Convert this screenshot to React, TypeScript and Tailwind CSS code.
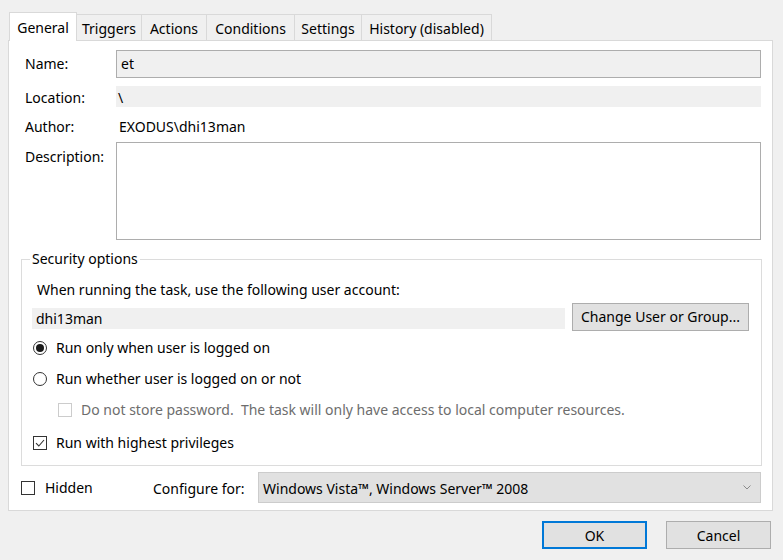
import React from "react";

const font = { fontFamily: '"Noto Sans", "Open Sans", sans-serif' };

function Radio({ checked }: { checked?: boolean }) {
  return (
    <span className="w-[14px] h-[14px] rounded-full border border-[#333333] bg-white flex items-center justify-center shrink-0">
      {checked && <span className="w-[8px] h-[8px] rounded-full bg-[#1a1a1a]" />}
    </span>
  );
}

function Check({ checked, disabled }: { checked?: boolean; disabled?: boolean }) {
  return (
    <span
      className={
        "w-[14px] h-[14px] border bg-white flex items-center justify-center shrink-0 " +
        (disabled ? "border-[#cccccc]" : "border-[#333333]")
      }
    >
      {checked && (
        <svg width="10" height="10" viewBox="0 0 10 10">
          <path d="M1 5.2 L3.8 8 L9 2" fill="none" stroke="#333" strokeWidth="1.1" />
        </svg>
      )}
    </span>
  );
}

export default function App() {
  const tabs = ["Triggers", "Actions", "Conditions", "Settings", "History (disabled)"];
  const tabW = [65, 65, 88, 67, 130];
  return (
    <div className="w-[783px] h-[560px] bg-[#f0f0f0] text-black text-[14px] leading-none overflow-hidden" style={font}>
      <div className="pt-[12px] pl-[9px] flex items-end h-[40px]">
        <div className="w-[68px] h-[29px] bg-white border border-b-0 border-[#d9d9d9] flex items-center justify-center relative z-10 -mb-px pt-[2px]">
          General
        </div>
        {tabs.map((t, i) => (
          <div
            key={t}
            style={{ width: tabW[i] }}
            className="h-[26px] bg-[#f0f0f0] border border-l-0 border-b-0 border-[#d9d9d9] flex items-center justify-center pt-[3px]"
          >
            {t}
          </div>
        ))}
      </div>
      <div className="ml-[8px] w-[765px] h-[471px] bg-white border border-[#d9d9d9] pl-[16px] pr-[11px] pt-[9px]">
        <div className="flex items-center h-[28px]">
          <div className="w-[91px]">Name:</div>
          <div className="flex-1 h-[28px] bg-[#f0f0f0] border border-[#adadad] flex items-center px-[4px]">et</div>
        </div>
        <div className="flex items-center h-[21px] mt-[8px]">
          <div className="w-[91px] pt-[3px]">Location:</div>
          <div className="flex-1 h-[21px] bg-[#f0f0f0] flex items-center px-[2px] pt-[3px]">\</div>
        </div>
        <div className="flex items-center h-[20px] mt-[9px]">
          <div className="w-[91px] pt-[1px]">Author:</div>
          <div className="flex-1 px-[3px] pt-[1px]">EXODUS\dhi13man</div>
        </div>
        <div className="flex items-start mt-[6px]">
          <div className="w-[91px] pt-[8px]">Description:</div>
          <div className="flex-1 h-[98px] bg-white border border-[#adadad]" />
        </div>
        <fieldset className="ml-[-4px] mt-[11px] h-[215px] border border-[#dcdcdc] pl-[10px] pr-[12px]">
          <legend className="ml-[-2px] px-[2px] leading-[16px]">Security options</legend>
          <div className="pl-[5px] mt-[16px]">When running the task, use the following user account:</div>
          <div className="flex items-start mt-[6px] h-[28px]">
            <div className="w-[533px] h-[21px] mt-[5px] bg-[#f0f0f0] flex items-center px-[4px]">dhi13man</div>
            <div className="ml-[7px] w-[177px] h-[28px] bg-[#e1e1e1] border border-[#adadad] flex items-center justify-center">
              Change User or Group...
            </div>
          </div>
          <div className="flex items-center gap-[9px] mt-[8px] h-[18px] pl-[1px]">
            <Radio checked />
            <span>Run only when user is logged on</span>
          </div>
          <div className="flex items-center gap-[9px] mt-[13px] h-[18px] pl-[1px]">
            <Radio />
            <span>Run whether user is logged on or not</span>
          </div>
          <div className="flex items-center gap-[9px] mt-[13px] h-[18px] pl-[26px] text-[#6d6d6d]">
            <Check disabled />
            <span>Do not store password.&nbsp; The task will only have access to local computer resources.</span>
          </div>
          <div className="flex items-center gap-[9px] mt-[15px] h-[18px] pl-[1px]">
            <Check checked />
            <span>Run with highest privileges</span>
          </div>
        </fieldset>
        <div className="flex items-center mt-[6px] ml-[-4px] h-[31px]">
          <div className="flex items-center gap-[10px] w-[132px]">
            <Check />
            <span>Hidden</span>
          </div>
          <div className="w-[105px] pt-[2px]">Configure for:</div>
          <div className="flex-1 h-[31px] bg-[#e1e1e1] border border-[#cccccc] flex items-center justify-between pl-[4px] pr-[9px]">
            <span className="pt-[2px]">Windows Vista™, Windows Server™ 2008</span>
            <svg width="8" height="5" viewBox="0 0 8 5">
              <path d="M0.5 0.5 L4 4 L7.5 0.5" fill="none" stroke="#8a8a8a" strokeWidth="1" />
            </svg>
          </div>
        </div>
      </div>
      <div className="flex justify-end gap-[19px] pr-[12px] mt-[10px]">
        <div className="w-[105px] h-[28px] bg-[#e1e1e1] border-2 border-[#0078d7] flex items-center justify-center pt-[1px]">OK</div>
        <div className="w-[105px] h-[28px] bg-[#e1e1e1] border border-[#adadad] flex items-center justify-center pt-[1px]">Cancel</div>
      </div>
    </div>
  );
}
